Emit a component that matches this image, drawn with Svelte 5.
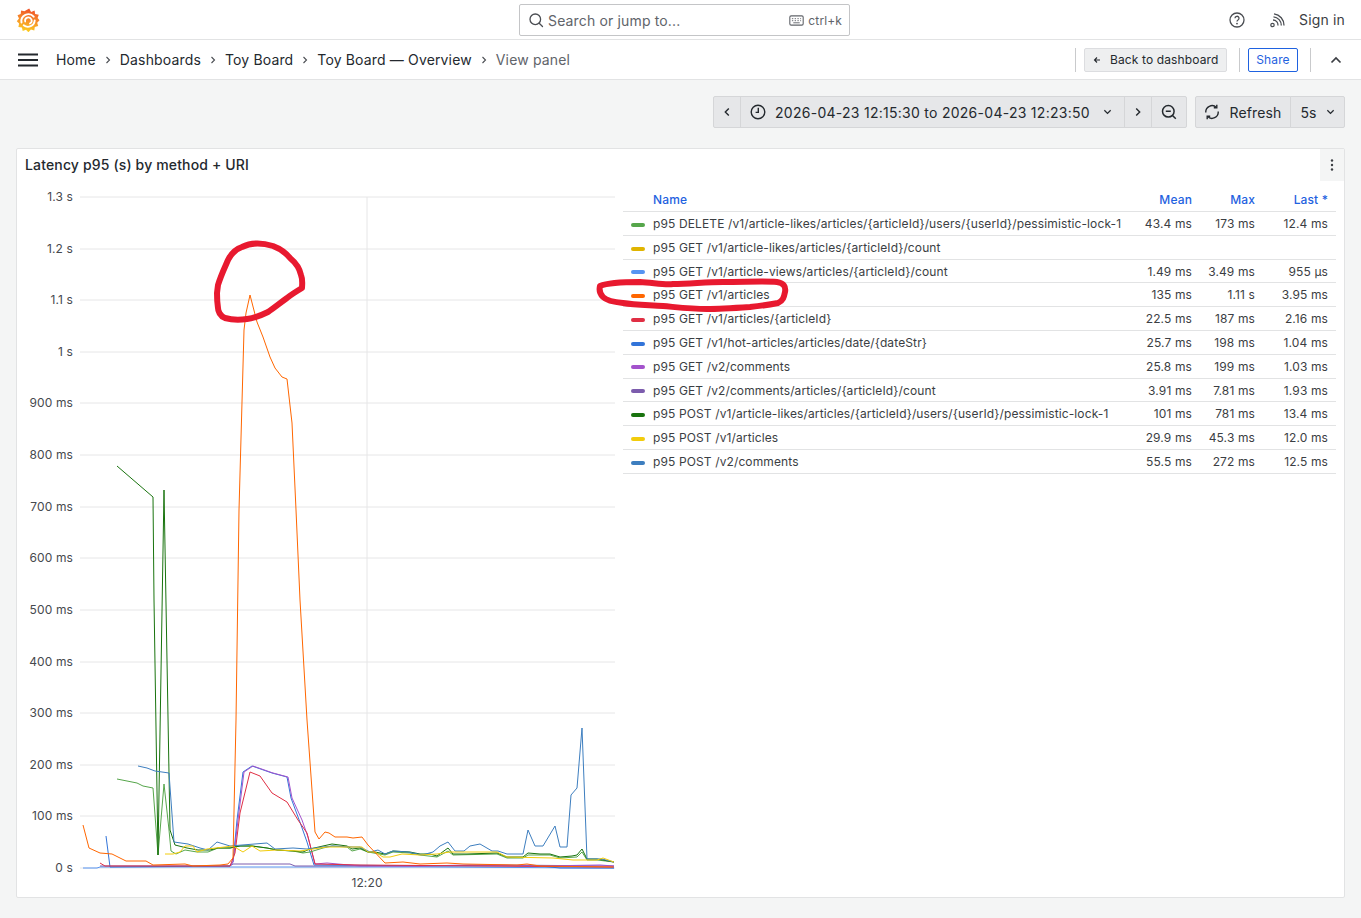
<script>
  const crumbs = ['Home', 'Dashboards', 'Toy Board', 'Toy Board — Overview'];

  const ticks = [
    ['1.3 s', 197], ['1.2 s', 249], ['1.1 s', 300], ['1 s', 352], ['900 ms', 403], ['800 ms', 455], ['700 ms', 507],
    ['600 ms', 558], ['500 ms', 610], ['400 ms', 662], ['300 ms', 713], ['200 ms', 765], ['100 ms', 816], ['0 s', 868]
  ];

  const rows = [
    { name: 'p95 DELETE /v1/article-likes/articles/{articleId}/users/{userId}/pessimistic-lock-1', color: '#56a64b', mean: '43.4 ms', max: '173 ms', last: '12.4 ms' },
    { name: 'p95 GET /v1/article-likes/articles/{articleId}/count', color: '#e0b400', mean: '', max: '', last: '' },
    { name: 'p95 GET /v1/article-views/articles/{articleId}/count', color: '#5794f2', mean: '1.49 ms', max: '3.49 ms', last: '955 µs' },
    { name: 'p95 GET /v1/articles', color: '#ff6600', mean: '135 ms', max: '1.11 s', last: '3.95 ms' },
    { name: 'p95 GET /v1/articles/{articleId}', color: '#e02f44', mean: '22.5 ms', max: '187 ms', last: '2.16 ms' },
    { name: 'p95 GET /v1/hot-articles/articles/date/{dateStr}', color: '#3274d9', mean: '25.7 ms', max: '198 ms', last: '1.04 ms' },
    { name: 'p95 GET /v2/comments', color: '#a352cc', mean: '25.8 ms', max: '199 ms', last: '1.03 ms' },
    { name: 'p95 GET /v2/comments/articles/{articleId}/count', color: '#7c5cad', mean: '3.91 ms', max: '7.81 ms', last: '1.93 ms' },
    { name: 'p95 POST /v1/article-likes/articles/{articleId}/users/{userId}/pessimistic-lock-1', color: '#19730e', mean: '101 ms', max: '781 ms', last: '13.4 ms' },
    { name: 'p95 POST /v1/articles', color: '#f2cc0c', mean: '29.9 ms', max: '45.3 ms', last: '12.0 ms' },
    { name: 'p95 POST /v2/comments', color: '#3d7ebf', mean: '55.5 ms', max: '272 ms', last: '12.5 ms' }
  ];

  const series = [
    ['#5794f2', '83,868 97,868 100,867 227,867 290,867 420,867 614,868'],
    ['#7c5cad', '100,866 230,866 233,864 290,864 295,866 420,866 500,865 614,866'],
    ['#3274d9', '106,836 110,867 230,866 233,862 237,820 243,772 252,766 272,773 287,777 291,798 301,825 307,842 314,865 450,866 540,866 560,868 614,868'],
    ['#a352cc', '230,866 233,862 238,820 244,772 253,766 273,773 288,777 292,798 302,820 308,837 315,864 327,863 360,866 420,866 470,865 540,866 600,865 614,866'],
    ['#e02f44', '100,863 105,866 230,866 235,853 240,813 250,772 260,776 272,793 287,802 298,820 307,833 315,864 360,865 614,867'],
    ['#56a64b', '117,779 137,783 143,786 153,788 158,855 164,784 169,830 171,851 176,854 185,850 197,852 208,852 218,848 230,848 240,846 252,846 267,848 277,850 293,851 303,853 310,852 323,848 332,846 347,847 352,851 360,849 368,852 385,855 393,852 410,853 420,855 437,857 448,851 453,855 497,854 507,858 523,858 528,855 550,855 560,858 577,857 582,852 587,860 597,860 614,862'],
    ['#19730e', '117,466 153,497 154,600 158,855 164,490 170,830 175,845 187,848 198,850 210,850 218,848 230,848 240,846 252,846 267,848 277,850 293,851 303,852 310,849 323,846 332,844 347,846 352,849 360,848 368,852 375,852 385,854 393,851 410,852 420,854 430,854 437,856 448,848 453,854 467,854 497,853 507,857 523,857 528,853 540,854 550,854 560,857 572,856 577,855 582,849 587,859 597,859 614,862'],
    ['#3d7ebf', '138,766 147,768 155,771 169,773 174,842 188,844 200,848 208,850 217,842 230,846 267,843 275,849 293,848 307,849 323,847 333,846 353,847 360,847 370,852 378,850 385,854 393,851 408,852 422,855 433,852 440,846 448,842 455,851 464,851 470,846 480,844 492,851 498,851 507,854 523,854 528,830 535,846 543,846 555,826 560,847 567,847 571,795 577,788 582,728 587,859 602,859 614,862'],
    ['#f2cc0c', '165,854 173,854 180,852 185,846 193,846 197,852 207,849 233,846 243,852 252,846 260,851 277,850 300,851 313,849 327,847 362,847 368,852 375,852 383,857 390,857 402,854 420,855 437,854 450,852 497,852 507,857 553,858 573,860 597,860 603,858 614,862'],
    ['#ff6600', '83,825 89,848 100,853 112,854 118,857 126,861 146,861 153,865 185,864 193,866 220,865 228,864 233,858 236,720 239,510 244,330 246,313 250,295 257,322 263,337 270,357 275,368 282,377 287,379 292,423 296,510 300,600 307,720 315,832 319,839 325,832 329,833 335,837 347,837 353,838 362,837 368,845 385,863 403,862 420,864 447,863 463,864 517,865 527,864 540,866 613,867']
  ];
</script>

<div class="page">
  <header class="topbar">
    <svg class="logo" viewBox="0 0 24 24" width="24" height="24" aria-hidden="true">
      <defs>
        <linearGradient id="flame" x1="0.4" y1="1" x2="0.6" y2="0">
          <stop offset="0" stop-color="#fcd21f" />
          <stop offset="0.5" stop-color="#f7902a" />
          <stop offset="1" stop-color="#ef4f2a" />
        </linearGradient>
      </defs>
      <path fill="url(#flame)" d="M13.200 .6l1.900 3.300 3.500-1.300.5 3.500 3.700.6-1.200 3.400 1.900 2.200-2.300 2.500 1 3.300-3.400.9-.5 3.500-3.400-.9-2.500 2.700-2.400-2.600-3.300 1.300-.8-3.500-3.500-.5.700-3.400L.8 13.200l2.200-2.800-1.500-3.100 3.200-1.300.4-3.500 3.300.8z" />
      <path fill="none" stroke="#fff" stroke-width="1.900" stroke-linecap="round" d="M5.500 14.500a7 7 0 0 1 12.200-5.800" />
      <path fill="none" stroke="#fff" stroke-width="1.900" stroke-linecap="round" d="M18.700 12.500a6.800 6.800 0 0 1-11 4.800" />
      <path fill="none" stroke="#fff" stroke-width="1.700" stroke-linecap="round" d="M9.200 13.600a3.300 3.300 0 1 1 4.700 2" />
    </svg>
    <div class="search">
      <svg viewBox="0 0 16 16" width="16" height="16" aria-hidden="true">
        <circle cx="7.300" cy="7.300" r="5.300" fill="none" stroke="#4a4d52" stroke-width="1.300" />
        <path d="M11.200 11.200l3.300 3.300" stroke="#4a4d52" stroke-width="1.300" stroke-linecap="round" />
      </svg>
      <span class="search-text">Search or jump to...</span>
      <svg class="kbd" viewBox="0 0 16 12" width="15" height="11" aria-hidden="true">
        <rect x="0.700" y="1" width="14.600" height="10" rx="1.500" fill="none" stroke="#61646a" stroke-width="1.200" />
        <path d="M3 4h1.500M6 4h1.500M9 4h1.500M12 4h1M3 6.200h1.500M6 6.200h1.500M9 6.200h1.500M12 6.200h1M4.500 8.500h7" stroke="#61646a" stroke-width="1" />
      </svg>
      <span class="kbd-text">ctrl+k</span>
    </div>
    <div class="top-actions">
      <svg viewBox="0 0 16 16" width="16" height="16" aria-hidden="true">
        <circle cx="8" cy="8" r="7" fill="none" stroke="#4a4d52" stroke-width="1.300" />
        <path d="M6 6.300a2 2 0 1 1 3 1.700c-.7.400-1 .8-1 1.500" fill="none" stroke="#4a4d52" stroke-width="1.300" />
        <circle cx="8" cy="11.600" r=".9" fill="#4a4d52" />
      </svg>
      <svg class="rss" viewBox="0 0 16 16" width="16" height="16" aria-hidden="true">
        <circle cx="3.500" cy="13" r="1.700" fill="none" stroke="#4a4d52" stroke-width="1.200" />
        <path d="M4 8a5 5 0 0 1 5 5.500M4.500 4.800a8.500 8.500 0 0 1 7.800 8.700M5 1.800a11.500 11.500 0 0 1 10 11.700" fill="none" stroke="#4a4d52" stroke-width="1.300" />
      </svg>
      <span class="signin">Sign in</span>
    </div>
  </header>

  <nav class="crumbbar">
    <svg class="burger" viewBox="0 0 20 14" width="20" height="14" aria-hidden="true">
      <path d="M0 1.500h20M0 7h20M0 12.500h20" stroke="#24292e" stroke-width="2" />
    </svg>
    <ol class="crumbs">
      {#each crumbs as crumb}
        <li>{crumb}</li>
        <li class="sep">
          <svg viewBox="0 0 8 8" width="8" height="8" aria-hidden="true"><path d="M2.500 1l3 3-3 3" fill="none" stroke="#4a4d52" stroke-width="1.100" /></svg>
        </li>
      {/each}
      <li class="current">View panel</li>
    </ol>
    <div class="crumb-actions">
      <span class="vline"></span>
      <button class="back">
        <svg viewBox="0 0 10 10" width="10" height="10" aria-hidden="true"><path d="M8 5H2.500M5 2.500L2.500 5 5 7.500" fill="none" stroke="#24292e" stroke-width="1.100" /></svg>
        Back to dashboard
      </button>
      <span class="vline gap-l"></span>
      <button class="share">Share</button>
      <span class="vline gap-s"></span>
      <svg class="collapse" viewBox="0 0 12 8" width="12" height="8" aria-hidden="true"><path d="M1.500 6.500L6 2l4.500 4.500" fill="none" stroke="#3b3e43" stroke-width="1.700" /></svg>
    </div>
  </nav>

  <main class="content">
    <div class="toolbar">
      <div class="btn-group">
        <button class="tool arrow">
          <svg viewBox="0 0 8 12" width="8" height="12" aria-hidden="true"><path d="M5.800 2.500L2.300 6l3.500 3.500" fill="none" stroke="#24292e" stroke-width="1.400" /></svg>
        </button>
        <button class="tool range">
          <svg viewBox="0 0 16 16" width="16" height="16" aria-hidden="true">
            <circle cx="8" cy="8" r="6.800" fill="none" stroke="#24292e" stroke-width="1.400" />
            <path d="M8.300 3.800v4.600H5.600" fill="none" stroke="#24292e" stroke-width="1.400" />
          </svg>
          <span>2026-04-23 12:15:30 to 2026-04-23 12:23:50</span>
          <svg class="caret" viewBox="0 0 10 6" width="9" height="6" aria-hidden="true"><path d="M1.500 1L5 4.500 8.500 1" fill="none" stroke="#24292e" stroke-width="1.400" /></svg>
        </button>
        <button class="tool arrow">
          <svg viewBox="0 0 8 12" width="8" height="12" aria-hidden="true"><path d="M2.200 2.500L5.700 6l-3.500 3.500" fill="none" stroke="#24292e" stroke-width="1.400" /></svg>
        </button>
        <button class="tool zoomout">
          <svg viewBox="0 0 16 16" width="16" height="16" aria-hidden="true">
            <circle cx="7.300" cy="7.300" r="5.800" fill="none" stroke="#24292e" stroke-width="1.500" />
            <path d="M4.800 7.300h5M11.500 11.500l3.300 3.300" fill="none" stroke="#24292e" stroke-width="1.500" />
          </svg>
        </button>
      </div>
      <div class="btn-group">
        <button class="tool refresh">
          <svg viewBox="0 0 16 16" width="16" height="16" aria-hidden="true">
            <path d="M1.800 8.500a6.300 6.300 0 0 1 10.600-5.100M14.200 7.500a6.300 6.300 0 0 1-10.600 5.100" fill="none" stroke="#24292e" stroke-width="1.400" />
            <path d="M12.800 .8v3h-3M3.200 15.200v-3h3" fill="none" stroke="#24292e" stroke-width="1.400" />
          </svg>
          <span>Refresh</span>
        </button>
        <button class="tool interval">
          <span>5s</span>
          <svg class="caret" viewBox="0 0 10 6" width="9" height="6" aria-hidden="true"><path d="M1.500 1L5 4.500 8.500 1" fill="none" stroke="#24292e" stroke-width="1.400" /></svg>
        </button>
      </div>
    </div>

    <section class="panel">
      <div class="panel-head">
        <h2>Latency p95 (s) by method + URI</h2>
        <button class="menu">
          <svg viewBox="0 0 4 14" width="4" height="14" aria-hidden="true">
            <circle cx="2" cy="2.500" r="1.200" fill="#3b3e43" /><circle cx="2" cy="7" r="1.200" fill="#3b3e43" /><circle cx="2" cy="11.500" r="1.200" fill="#3b3e43" />
          </svg>
        </button>
      </div>
      <div class="panel-body">
        <svg class="chart" viewBox="17 181 604 712" width="604" height="712" aria-label="Latency chart">
          {#each ticks as [label, y]}
            <line x1="80" x2="615" y1={y} y2={y} class="grid" />
            <text x="73" y={y + 4} text-anchor="end" class="tick">{label}</text>
          {/each}
          <line x1="367" x2="367" y1="197" y2="868" class="grid" />
          <text x="367" y="887" text-anchor="middle" class="tick">12:20</text>
          {#each series as [color, points]}
            <polyline {points} fill="none" stroke={color} stroke-width="1" stroke-linejoin="round" />
          {/each}
        </svg>
        <table class="legend">
          <colgroup><col class="c-name" /><col class="c-mean" /><col class="c-max" /><col class="c-last" /></colgroup>
          <thead>
            <tr>
              <th class="name-h">Name</th>
              <th>Mean</th>
              <th>Max</th>
              <th>Last *</th>
            </tr>
          </thead>
          <tbody>
            {#each rows as row}
              <tr>
                <td class="name"><i style="background: {row.color}"></i>{row.name}</td>
                <td>{row.mean}</td>
                <td>{row.max}</td>
                <td>{row.last}</td>
              </tr>
            {/each}
          </tbody>
        </table>
      </div>
    </section>
  </main>

  <svg class="scribble" viewBox="0 0 1361 918" width="1361" height="918" aria-hidden="true">
    <path d="M218 285C221 275 225 267 228 260C232 252 236 249 242 247C250 243 260 242 273 246C281 249 286 253 290 258C296 263 300 270 301 275C303 280 302 285 302 288C297 291 292 294 287 298C280 303 274 308 268 312C262 315 255 318 247 319C240 320 232 320 225 318C220 316 218 311 218 308C217 302 217 297 217 293Z" />
    <path d="M600 286C607 283 625 282 640 282C655 283 665 285 673 284C690 284 705 282 723 282C745 282 765 281 777 282C784 283 786 287 785 292C784 297 783 301 778 303C768 305 760 306 750 307C735 308 720 309 707 309C690 309 675 307 663 306C650 305 635 305 623 303C612 302 606 300 603 297C600 294 599 290 600 286Z" />
  </svg>
</div>

<style>
  :global(body) {
    margin: 0;
    background: #f4f5f5;
  }

  .page {
    position: relative;
    width: 1361px;
    height: 918px;
    overflow: hidden;
    font-family: Inter, "Noto Sans", sans-serif;
    font-size: 14px;
    letter-spacing: 0.15px;
    color: #24292e;
  }

  button {
    font: inherit;
    letter-spacing: inherit;
    color: inherit;
    cursor: pointer;
  }

  .topbar {
    position: relative;
    display: flex;
    align-items: center;
    justify-content: space-between;
    box-sizing: border-box;
    height: 40px;
    padding: 0 16px;
    background: #fff;
    border-bottom: 1px solid #e2e3e4;
  }

  .logo {
    margin-top: 1px;
  }

  .search {
    position: absolute;
    left: 519px;
    top: 4px;
    box-sizing: border-box;
    width: 331px;
    height: 32px;
    display: flex;
    align-items: center;
    padding: 0 7px 0 8px;
    background: #fff;
    border: 1px solid #c4c5c7;
    border-radius: 2px;
  }

  .search-text {
    margin-left: 4px;
    color: #61646a;
  }

  .kbd {
    margin-left: auto;
  }

  .kbd-text {
    margin-left: 4px;
    font-size: 12px;
    letter-spacing: 0.12px;
    color: #61646a;
  }

  .top-actions {
    display: flex;
    align-items: center;
  }

  .rss {
    margin-left: 24px;
  }

  .signin {
    margin-left: 14px;
    color: #3b3e43;
  }

  .crumbbar {
    display: flex;
    align-items: center;
    box-sizing: border-box;
    height: 40px;
    padding: 0 19px 0 18px;
    background: #fff;
    border-bottom: 1px solid #e2e3e4;
  }

  .crumbs {
    display: flex;
    align-items: center;
    gap: 6px;
    list-style: none;
    margin: 0 0 0 18px;
    padding: 0;
  }

  .sep {
    display: flex;
    width: 12px;
    justify-content: center;
  }

  .current {
    color: #61646a;
  }

  .crumb-actions {
    display: flex;
    align-items: center;
    margin-left: auto;
  }

  .vline {
    width: 1px;
    height: 24px;
    margin-right: 8px;
    background: #c9cacc;
  }

  .gap-l {
    margin-left: 12px;
  }

  .gap-s {
    margin-left: 12px;
    margin-right: 19px;
  }

  .back {
    display: flex;
    align-items: center;
    gap: 8px;
    box-sizing: border-box;
    width: 143px;
    height: 24px;
    padding: 0 7px;
    font-size: 12px;
    letter-spacing: 0.12px;
    white-space: nowrap;
    background: #eeeff0;
    border: 1px solid #dcdde0;
    border-radius: 2px;
  }

  .share {
    box-sizing: border-box;
    width: 50px;
    height: 24px;
    padding: 0;
    font-size: 12px;
    letter-spacing: 0.12px;
    color: #1f62e0;
    background: #fff;
    border: 1px solid #1f62e0;
    border-radius: 2px;
  }

  .collapse {
    display: block;
  }

  .content {
    box-sizing: border-box;
    padding: 16px 16px 0;
  }

  .toolbar {
    display: flex;
    justify-content: flex-end;
    gap: 8px;
    margin-bottom: 20px;
  }

  .btn-group {
    display: flex;
  }

  .tool {
    display: flex;
    align-items: center;
    justify-content: center;
    box-sizing: border-box;
    height: 32px;
    padding: 0;
    background: #e6e7e9;
    border: 1px solid #d5d6d8;
    margin-left: -1px;
    border-radius: 0;
  }

  .btn-group .tool:first-child {
    margin-left: 0;
    border-radius: 2px 0 0 2px;
  }

  .btn-group .tool:last-child {
    border-radius: 0 2px 2px 0;
  }

  .arrow {
    width: 28px;
  }

  .range {
    width: 385px;
    gap: 9px;
    justify-content: flex-start;
    padding-left: 9px;
    letter-spacing: 0.27px;
    white-space: nowrap;
  }

  .caret {
    margin-left: 9px;
  }

  .range .caret {
    margin-left: 4px;
  }

  .zoomout {
    width: 36px;
  }

  .refresh {
    width: 96px;
    gap: 9px;
  }

  .interval {
    width: 55px;
    gap: 0;
  }

  .panel {
    box-sizing: border-box;
    height: 750px;
    background: #fff;
    border: 1px solid #e2e3e4;
    border-radius: 2px;
  }

  .panel-head {
    display: flex;
    align-items: center;
    justify-content: space-between;
    height: 32px;
  }

  h2 {
    margin: 0 0 0 8px;
    font-size: 14px;
    font-weight: 500;
    line-height: 32px;
  }

  .menu {
    display: flex;
    align-items: center;
    justify-content: center;
    width: 24px;
    height: 32px;
    padding: 0;
    background: #f4f5f5;
    border: 0;
  }

  .panel-body {
    display: flex;
    align-items: flex-start;
  }

  .chart {
    flex: none;
    display: block;
  }

  .grid {
    stroke: #e6e6e7;
    stroke-width: 1;
  }

  .tick {
    font-size: 12px;
    letter-spacing: 0.12px;
    fill: #46494e;
  }

  .legend {
    flex: none;
    width: 713px;
    margin: 7.100px 0 0 2px;
    border-collapse: collapse;
    table-layout: fixed;
    font-size: 12px;
    letter-spacing: 0.12px;
  }

  .c-name { width: 507px; }
  .c-mean { width: 70px; }
  .c-max { width: 63px; }
  .c-last { width: 73px; }

  th {
    height: 23px;
    padding: 0 8px 0 0;
    font-weight: 500;
    text-align: right;
    color: #1f62e0;
    border-bottom: 1px solid #e2e3e4;
  }

  th.name-h {
    padding-left: 30px;
    text-align: left;
  }

  td {
    height: 23.800px;
    box-sizing: border-box;
    padding: 0 8px 0 0;
    text-align: right;
    white-space: nowrap;
    color: #3b3e43;
    border-bottom: 1px solid #e2e3e4;
  }

  td.name {
    padding-left: 8px;
    text-align: left;
  }

  td.name i {
    display: inline-block;
    width: 14px;
    height: 4px;
    margin-right: 8px;
    vertical-align: middle;
    border-radius: 2px;
  }

  .scribble {
    position: absolute;
    left: 0;
    top: 0;
    pointer-events: none;
  }

  .scribble path {
    fill: none;
    stroke: #e8192f;
    stroke-width: 6;
    stroke-linejoin: round;
  }
</style>
